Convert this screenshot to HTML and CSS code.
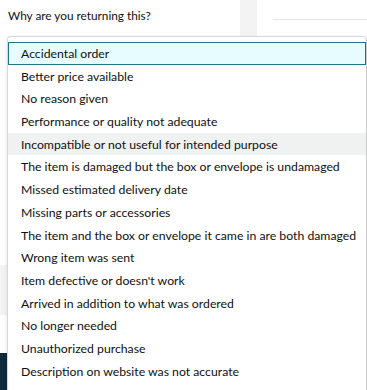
FILE: index.html
```html
<!DOCTYPE html>
<html>
<head>
<meta charset="utf-8">
<link rel="stylesheet" href="styles.css">
</head>
<body>
<div class="page">
  <div class="header">
    <div class="question">Why are you returning this?</div>
    <div class="gutter"></div>
    <div class="rightcol"><div class="rule"></div></div>
  </div>
  <div class="side">
    <div class="side-gap1"></div>
    <div class="side-gray"></div>
    <div class="side-gap2"></div>
    <div class="side-navy"></div>
  </div>
  <ul class="menu">
    <li class="item selected">Accidental order</li>
    <li class="item">Better price available</li>
    <li class="item">No reason given</li>
    <li class="item">Performance or quality not adequate</li>
    <li class="item hover">Incompatible or not useful for intended purpose</li>
    <li class="item">The item is damaged but the box or envelope is undamaged</li>
    <li class="item">Missed estimated delivery date</li>
    <li class="item">Missing parts or accessories</li>
    <li class="item">The item and the box or envelope it came in are both damaged</li>
    <li class="item">Wrong item was sent</li>
    <li class="item">Item defective or doesn't work</li>
    <li class="item">Arrived in addition to what was ordered</li>
    <li class="item">No longer needed</li>
    <li class="item">Unauthorized purchase</li>
    <li class="item">Description on website was not accurate</li>
  </ul>
</div>
</body>
</html>
```
FILE: styles.css
```css
html, body {
  margin: 0;
  padding: 0;
  background: #ffffff;
}
body {
  font-family: Lato, "Noto Sans", sans-serif;
  color: #0f1111;
  width: 367px;
  height: 390px;
  overflow: hidden;
}
.page {
  position: relative;
  width: 367px;
  height: 390px;
}
.header {
  display: flex;
  height: 36px;
}
.question {
  width: 240px;
  padding: 8px 0 0 8px;
  box-sizing: border-box;
  font-size: 11.8px;
  color: #0f1111;
}
.gutter {
  width: 17px;
  background: #f3f3f3;
}
.rightcol {
  flex: 1;
  padding: 19px 0 0 16px;
}
.rule {
  height: 1px;
  background: #e3e3e3;
}
.side {
  display: flex;
  flex-direction: column;
  width: 7px;
  height: 354px;
}
.side-gap1 { height: 229px; }
.side-gray { height: 50px; background: #f3f3f3; }
.side-gap2 { height: 38px; }
.side-navy { flex: 1; background: #0f2a3d; }
.menu {
  position: absolute;
  left: 7px;
  top: 36px;
  width: 360px;
  box-sizing: border-box;
  margin: 0;
  padding: 5px 0 0 0;
  list-style: none;
  background: #ffffff;
  border: 1px solid #d5d9d9;
  border-right: 1px solid #c8cccc;
  border-radius: 4px 4px 0 0;
  height: 360px;
  box-shadow: 0 2px 5px rgba(15,17,17,0.1);
}
.item {
  height: 22.7px;
  line-height: 23.4px;
  padding-left: 13px;
  font-size: 12.25px;
  white-space: nowrap;
  box-sizing: border-box;
}
.item.selected {
  background: #e6fcff;
  border: 1px solid #217582;
  padding-left: 12px;
  line-height: 21.4px;
}
.item.hover {
  background: #f0f2f2;
}
```
